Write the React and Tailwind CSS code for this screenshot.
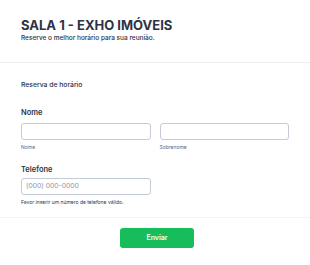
export default function App() {
  return (
    <div className="w-[310px] h-[265px] bg-white overflow-hidden text-[#2c3345]" style={{ fontFamily: "Inter, 'Liberation Sans', sans-serif" }}>
      <div className="px-[21px] pt-[17px] pb-[19px]">
        <h1 className="text-[13px] leading-[16px] font-bold">SALA 1 - EXHO IMÓVEIS</h1>
        <p className="text-[6.5px] leading-[9px] font-medium mt-[1px]">Reserve o melhor horário para sua reunião.</p>
      </div>
      <div className="border-t border-[#eceef2]"></div>
      <div className="px-[21px] pt-[17px]">
        <p className="text-[6.8px] leading-[10px] font-medium">Reserva de horário</p>
        <p className="text-[7.5px] leading-[10px] font-semibold mt-[18px]">Nome</p>
        <div className="flex gap-[9px] mt-[5px]">
          <div className="w-[131px]">
            <div className="h-[17px] border border-[#c3cad8] rounded-[3px]"></div>
            <p className="text-[5px] leading-[7px] text-[#57647e] mt-[4px]">Nome</p>
          </div>
          <div className="w-[131px]">
            <div className="h-[17px] border border-[#c3cad8] rounded-[3px]"></div>
            <p className="text-[5px] leading-[7px] text-[#57647e] mt-[4px]">Sobrenome</p>
          </div>
        </div>
        <p className="text-[7.5px] leading-[10px] font-semibold mt-[14px]">Telefone</p>
        <div className="w-[130px] h-[17px] border border-[#c3cad8] rounded-[3px] mt-[3px] flex items-center px-[4px] text-[6.8px] text-[#8f96a3]">(000) 000-0000</div>
        <p className="text-[5px] leading-[7px] text-[#2c3345] mt-[4px]">Favor inserir um número de telefone válido.</p>
      </div>
      <div className="border-t border-[#f3f3f5] mt-[11px]"></div>
      <div className="flex justify-center pt-[10px] pl-[4px]">
        <button className="w-[74px] h-[20px] bg-[#18bd5b] rounded-[3px] text-white text-[7px] font-semibold">Enviar</button>
      </div>
    </div>
  );
}
